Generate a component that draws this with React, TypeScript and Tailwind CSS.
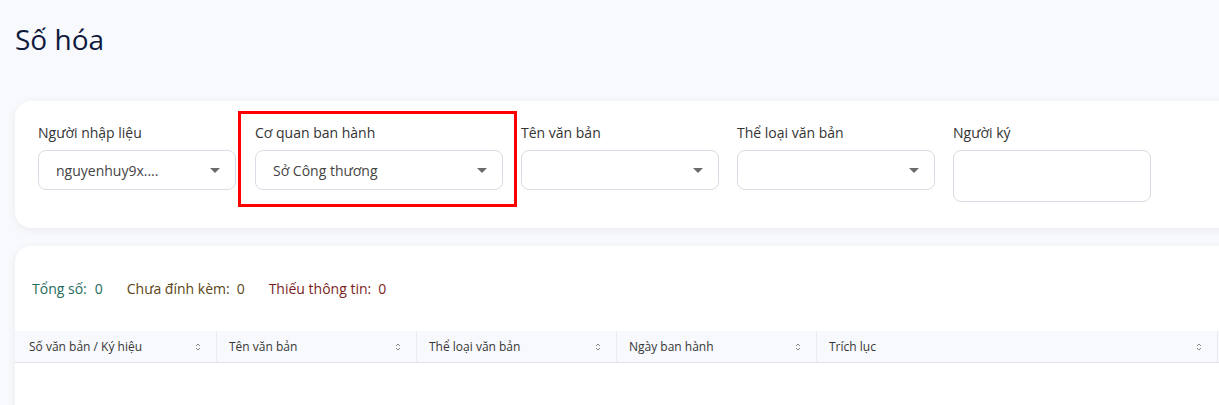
import { ReactNode } from 'react'

function Caret() {
  return (
    <svg width="10" height="5" viewBox="0 0 10 5" className="shrink-0">
      <path d="M0 0 L10 0 L5 5 Z" fill="#6b6b6b" />
    </svg>
  )
}

function SortIcon() {
  return (
    <svg width="6" height="10" viewBox="0 0 6 10" className="shrink-0">
      <path d="M1 4 L3 2 L5 4" fill="none" stroke="#8a8a8a" strokeWidth="1" />
      <path d="M1 6 L3 8 L5 6" fill="none" stroke="#8a8a8a" strokeWidth="1" />
    </svg>
  )
}

function Field({ label, children }: { label: string; children: ReactNode }) {
  return (
    <div>
      <p className="text-[14px] leading-[20px] text-[#333] mb-[7px]">{label}</p>
      {children}
    </div>
  )
}

function Select({ value, width = 'w-[198px]' }: { value?: string; width?: string }) {
  return (
    <div
      className={`${width} h-[40px] rounded-[8px] border border-[#dcdce6] bg-white flex items-center justify-between pl-[17px] pr-[15px] text-[14px] text-[#444]`}
    >
      <span>{value}</span>
      <Caret />
    </div>
  )
}

const columns = [
  { title: 'Số văn bản / Ký hiệu', width: 'w-[202px] pl-[14px]' },
  { title: 'Tên văn bản', width: 'w-[200px] pl-[12px]' },
  { title: 'Thể loại văn bản', width: 'w-[200px] pl-[12px]' },
  { title: 'Ngày ban hành', width: 'w-[200px] pl-[12px]' },
  { title: 'Trích lục', width: 'w-[401px] pl-[12px]' },
]

export default function App() {
  return (
    <div className="w-[1219px] h-[405px] overflow-hidden bg-[#f8f9fc] font-['Open_Sans',sans-serif]">
      <div className="pl-[15px]">
        <h1 className="pt-[20px] text-[28px] leading-[38px] text-[#0f1a3c]">Số hóa</h1>

        {/* Filters */}
        <div className="mt-[43px] w-[1240px] rounded-[16px] bg-white shadow-[0_2px_8px_rgba(20,30,60,0.06)] pt-[22px] pb-[21px] pl-[23px]">
          <div className="flex items-start">
            <div className="w-[198px]">
              <Field label="Người nhập liệu">
                <Select value="nguyenhuy9x...." />
              </Field>
            </div>

            <div className="ml-[2px] -mt-[12px] w-[279px] border-[3px] border-[#f00] pl-[14px] pt-[9px] pb-[14px]">
              <Field label="Cơ quan ban hành">
                <Select value="Sở Công thương" width="w-[248px]" />
              </Field>
            </div>

            <div className="ml-[4px] w-[198px]">
              <Field label="Tên văn bản">
                <Select />
              </Field>
            </div>

            <div className="ml-[18px] w-[198px]">
              <Field label="Thể loại văn bản">
                <Select />
              </Field>
            </div>

            <div className="ml-[18px] w-[198px]">
              <Field label="Người ký">
                <div className="w-[198px] h-[52px] rounded-[8px] border border-[#dcdce6] bg-white" />
              </Field>
            </div>
          </div>
        </div>

        {/* Results */}
        <div className="mt-[18px] w-[1240px] h-[200px] rounded-t-[16px] bg-white shadow-[0_2px_8px_rgba(20,30,60,0.06)] pt-[33px]">
          <div className="flex gap-[24px] pl-[17px] text-[14px] leading-[20px]">
            <p className="text-[#1e6b5c]">
              Tổng số:<span className="ml-[8px]">0</span>
            </p>
            <p className="text-[#5a4514]">
              Chưa đính kèm:<span className="ml-[7px]">0</span>
            </p>
            <p className="text-[#7a1e1e]">
              Thiếu thông tin:<span className="ml-[7px]">0</span>
            </p>
          </div>

          <div className="mt-[32px] flex h-[32px] bg-[#f8f9fd] border-b border-[#e3e4ea]">
            {columns.map((col) => (
              <div
                key={col.title}
                className={`${col.width} flex items-center justify-between pr-[15px] border-r border-[#ebecf1] text-[12px] text-[#363636]`}
              >
                <span>{col.title}</span>
                <SortIcon />
              </div>
            ))}
          </div>
        </div>
      </div>
    </div>
  )
}
